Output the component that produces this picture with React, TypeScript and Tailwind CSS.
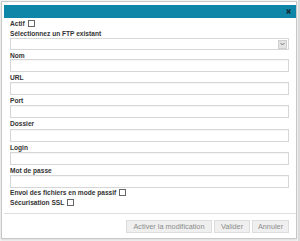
import React from 'react'

const font = { fontFamily: '"Liberation Sans", Arial, sans-serif' }

function Box() {
  return <span className="inline-block w-[7px] h-[7px] border border-[#666] bg-white ml-[3px]" />
}

function Field({ label, first }: { label: string; first?: boolean }) {
  return (
    <>
      <div
        className={`${first ? 'h-[9px] leading-[9px]' : 'h-[10.2px] leading-[10.2px]'} pt-[1px] text-[6.6px] font-bold text-[#333]`}
      >
        {label}
      </div>
      <div className="h-[13px] border border-[#d6d6d6] bg-white shadow-[inset_0_1px_1px_rgba(0,0,0,0.04)]" />
    </>
  )
}

export default function App() {
  return (
    <div className="w-[300px] h-[241px] bg-[#f4f4f4] flex overflow-hidden" style={font}>
      <div className="ml-[1px] mt-[1px] w-[297px] h-[238px] border border-[#c8c8c8] bg-white pl-[2px] pr-[0px] pt-[3px] flex flex-col shadow-[0_1px_2px_rgba(0,0,0,0.1)]">
        <div className="h-[13px] bg-[#0e86a7] flex items-center justify-end pr-[5px] shrink-0">
          <svg width="5" height="5" viewBox="0 0 5 5">
            <path d="M0.6 0.6 L4.4 4.4 M4.4 0.6 L0.6 4.4" stroke="#142a33" strokeWidth="1.4" />
          </svg>
        </div>

        <div className="flex flex-col pl-[6px] pr-[7px]">
          <div className="h-[11px] flex items-center text-[6.6px] font-bold text-[#333]">
            Actif
            <Box />
          </div>
          <div className="h-[9px] leading-[9px] text-[6.6px] font-bold text-[#333]">
            Sélectionnez un FTP existant
          </div>
          <div className="h-[12px] border border-[#d6d6d6] bg-white flex justify-end items-center pr-[1px]">
            <div className="w-[9px] h-[9px] bg-[#e4e4e4] border border-[#cfcfcf] flex items-center justify-center">
              <svg width="5" height="4" viewBox="0 0 5 4">
                <path d="M0.5 1 L2.5 3 L4.5 1" stroke="#777" strokeWidth="1" fill="none" />
              </svg>
            </div>
          </div>
          <Field label="Nom" first />
          <Field label="URL" />
          <Field label="Port" />
          <Field label="Dossier" />
          <Field label="Login" />
          <Field label="Mot de passe" />
          <div className="h-[10px] flex items-center text-[6.6px] font-bold text-[#333]">
            Envoi des fichiers en mode passif
            <Box />
          </div>
          <div className="h-[10px] flex items-center text-[6.6px] font-bold text-[#333]">
            Sécurisation SSL
            <Box />
          </div>
        </div>

        <div className="mt-[5px] border-t border-[#dedede] flex justify-end gap-[2px] pt-[6px] pr-[7px]">
          <button className="w-[86px] h-[13px] bg-[#efefef] border border-[#dcdcdc] text-[7.3px] text-[#8c8c8c] leading-none">
            Activer la modification
          </button>
          <button className="w-[36px] h-[13px] bg-[#efefef] border border-[#dcdcdc] text-[7.3px] text-[#8c8c8c] leading-none">
            Valider
          </button>
          <button className="w-[37px] h-[13px] bg-[#efefef] border border-[#dcdcdc] text-[7.3px] text-[#8c8c8c] leading-none">
            Annuler
          </button>
        </div>
      </div>
      <div className="ml-[1px] w-[2px] h-full bg-[#dcdcdc]" />
    </div>
  )
}
